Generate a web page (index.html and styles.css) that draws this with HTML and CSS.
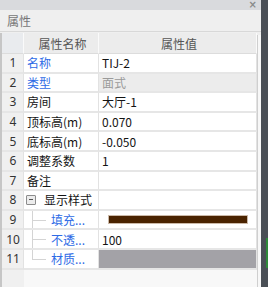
FILE: index.html
```html
<!DOCTYPE html>
<html lang="zh-CN">
<head>
  <meta charset="UTF-8" />
  <title>属性</title>
  <link rel="stylesheet" href="styles.css">
</head>
<body>
  <div class="panel">
    <div class="titlebar"><span class="close">×</span></div>
    <div class="caption">属性</div>

    <div class="sheet">
      <div class="grid">
        <div class="row head">
          <div class="num"></div>
          <div class="name">属性名称</div>
          <div class="val">属性值</div>
        </div>
        <div class="row">
          <div class="num">1</div>
          <div class="name blue">名称</div>
          <div class="val">TIJ-2</div>
        </div>
        <div class="row">
          <div class="num">2</div>
          <div class="name blue">类型</div>
          <div class="val readonly">面式</div>
        </div>
        <div class="row">
          <div class="num">3</div>
          <div class="name">房间</div>
          <div class="val">大厅-1</div>
        </div>
        <div class="row">
          <div class="num">4</div>
          <div class="name">顶标高(m)</div>
          <div class="val">0.070</div>
        </div>
        <div class="row">
          <div class="num">5</div>
          <div class="name">底标高(m)</div>
          <div class="val">-0.050</div>
        </div>
        <div class="row">
          <div class="num">6</div>
          <div class="name">调整系数</div>
          <div class="val">1</div>
        </div>
        <div class="row">
          <div class="num">7</div>
          <div class="name">备注</div>
          <div class="val"></div>
        </div>
        <div class="row">
          <div class="num">8</div>
          <div class="name group"><span class="toggle"></span>显示样式</div>
          <div class="val"></div>
        </div>
        <div class="row">
          <div class="num">9</div>
          <div class="name child blue"><span class="branch"></span>填充...</div>
          <div class="val"><span class="swatch"></span></div>
        </div>
        <div class="row">
          <div class="num">10</div>
          <div class="name child blue"><span class="branch"></span>不透...</div>
          <div class="val">100</div>
        </div>
        <div class="row">
          <div class="num">11</div>
          <div class="name child blue last"><span class="branch"></span>材质...</div>
          <div class="val material"></div>
        </div>
        <div class="row rest">
          <div class="num"></div>
          <div class="name"></div>
          <div class="val"></div>
        </div>
      </div>
      <div class="edge"></div>
    </div>
  </div>
</body>
</html>
```

FILE: styles.css
```css
body {
  margin: 0;
  width: 268px;
  height: 287px;
  overflow: hidden;
  background: linear-gradient(#2f8a3a, #2f8a3a) no-repeat 266px 238px / 2px 30px, #4a4f56;
  font-family: "Noto Sans CJK SC", "Noto Sans", sans-serif;
  font-size: 12px;
  color: #141414;
}

.panel {
  width: 261px;
  height: 287px;
  display: flex;
  flex-direction: column;
  background: #efefef;
}

.titlebar {
  height: 13px;
  background: #d9dadd;
  display: flex;
  justify-content: flex-end;
  align-items: center;
}

.close {
  color: #8a8a8a;
  font-size: 10px;
  line-height: 1;
  margin-right: 4px;
  font-family: "DejaVu Sans", sans-serif;
  font-weight: bold;
}

.caption {
  height: 21px;
  line-height: 22px;
  padding-left: 7px;
  color: #777;
  font-size: 12px;
  background: #efefef;
  border-bottom: 1px solid #d8d8d8;
}

.sheet {
  flex: 1;
  display: flex;
  border-left: 2px solid #c6c6c6;
  margin-top: 1px;
}

.grid {
  display: grid;
  grid-template-columns: 22px 75px 158px;
  grid-auto-rows: 19.6px;
  grid-template-rows: 21px;
}

.row {
  display: contents;
}

.row > div {
  display: flex;
  align-items: center;
  border-bottom: 2px solid #e6e6e6;
  border-right: 1px solid #e2e2e2;
  background: #fff;
  white-space: nowrap;
  overflow: hidden;
}

.num {
  justify-content: center;
  background: #f0f0f0 !important;
  color: #333;
  font-size: 12px;
  font-family: "Noto Sans", sans-serif;
  padding-left: 1px;
}

.name {
  padding-left: 3px;
}

.val {
  padding-left: 3px;
}

.head > div {
  background: #ececec;
  color: #555;
  justify-content: center;
  border-right: 1px solid #fafafa;
  border-bottom: 1px solid #dcdcdc;
}

.head .num {
  background: #e9ebee !important;
}

.blue {
  color: #2e6be6;
}

.readonly {
  background: #ececec !important;
  color: #9a9a9a;
}

.toggle {
  width: 8px;
  height: 8px;
  border: 1px solid #8c8c8c;
  background: #ececec;
  border-radius: 1px;
  margin: 0 8px 0 -1px;
  position: relative;
  flex: none;
}

.toggle::after {
  content: "";
  position: absolute;
  left: 2px;
  top: 3.5px;
  width: 4px;
  height: 1px;
  background: #555;
}

.child {
  padding-left: 0;
  position: relative;
}

.branch {
  width: 22px;
  height: 100%;
  flex: none;
  position: relative;
  margin-right: 5px;
}

.branch::before {
  content: "";
  position: absolute;
  left: 8px;
  top: -3px;
  bottom: -2px;
  border-left: 1px solid #d4d4d4;
}

.branch::after {
  content: "";
  position: absolute;
  left: 8px;
  top: 50%;
  width: 14px;
  border-top: 1px solid #d4d4d4;
}

.last .branch::before {
  bottom: 50%;
}

.swatch {
  display: block;
  margin-left: 6px;
  width: 138px;
  height: 7px;
  background: #4a2300;
  border: 1px solid #cbb9a8;
}

.material {
  background: #a3a2a7 !important;
}

.rest > div {
  background: #f8f8f8;
  border: none;
  height: 30px;
}

.edge {
  width: 3px;
  border-left: 1px solid #cfcfcf;
  background: #f7f7f7;
  margin-top: 2px;
}
```
